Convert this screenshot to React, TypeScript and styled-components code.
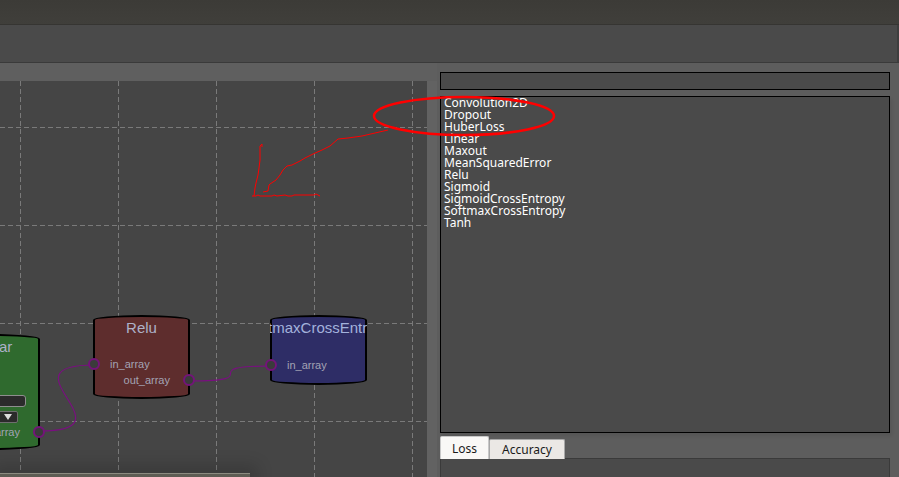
import React from "react";
import styled, { createGlobalStyle } from "styled-components";

const GlobalStyle = createGlobalStyle`
  html, body { margin: 0; padding: 0; background: #5f5f5f; overflow: hidden; }
  #root { width: 899px; height: 477px; }
`;

const Page = styled.div`
  position: relative;
  width: 899px;
  height: 477px;
  display: flex;
  flex-direction: column;
  background: #5f5f5f;
  overflow: hidden;
  font-family: "Liberation Sans", Arial, sans-serif;
`;

const TitleBar = styled.div`
  flex: none;
  height: 24px;
  background: linear-gradient(#3c3b37, #403f3b);
  border-bottom: 1px solid #363532;
`;

const ToolBar = styled.div`
  flex: none;
  height: 37px;
  background: #4a4a4a;
  border-bottom: 1px solid #3a3a3a;
  box-shadow: inset -2px 0 0 #3e3e3e;
`;

const Main = styled.div`
  flex: 1;
  display: flex;
  min-height: 0;
`;

const Canvas = styled.div`
  position: relative;
  flex: none;
  width: 427px;
  margin-top: 18px;
  background: #454545;
  overflow: hidden;
`;

const GridLayer = styled.svg`
  position: absolute;
  inset: 0;
`;

const Gutter = styled.div`
  flex: none;
  width: 10px;
  margin-top: 18px;
  background: #626262;
`;

const Side = styled.div`
  flex: 1;
  display: flex;
  flex-direction: column;
  padding: 9px 9px 0 3px;
  background: #5d5d5d;
`;

const SearchBox = styled.div`
  height: 16px;
  border: 1px solid #000;
  background: #4a4a4a;
`;

const List = styled.ul`
  list-style: none;
  margin: 6px 0 0;
  padding: 0 0 0 3px;
  height: 335px;
  border: 1px solid #000;
  background: #4a4a4a;
  box-shadow: 2px 3px 3px rgba(0, 0, 0, 0.08);
  font-family: "Noto Sans", sans-serif;
  font-size: 12px;
  line-height: 12px;
  color: #ffffff;
`;

const Item = styled.li`
  height: 12px;
  white-space: nowrap;
`;

const Tabs = styled.div`
  display: flex;
  align-items: flex-end;
  margin-top: 4px;
  height: 22px;
`;

const Tab = styled.div<{ $active?: boolean }>`
  box-sizing: border-box;
  height: ${(p) => (p.$active ? 23 : 20)}px;
  padding: 0 ${(p) => (p.$active ? 11 : 12)}px;
  display: flex;
  align-items: center;
  font-family: "Noto Sans", sans-serif;
  font-size: 12px;
  color: #1a1a1a;
  background: ${(p) => (p.$active ? "#f9f8f6" : "#ebe8e5")};
  border: 1px solid ${(p) => (p.$active ? "#c8c8c8" : "#a8a8a8")};
  border-bottom: none;
  border-radius: 2px 2px 0 0;
  position: relative;
  z-index: ${(p) => (p.$active ? 1 : 0)};
`;

const TabPanel = styled.div`
  flex: 1;
  border: 1px solid #3a3a3a;
  border-bottom: none;
  background: #4a4a4a;
  margin-top: -1px;
`;

const NodeBox = styled.div<{ $bg: string; $x: number; $y: number; $h: number }>`
  position: absolute;
  left: ${(p) => p.$x}px;
  top: ${(p) => p.$y}px;
  width: 97px;
  height: ${(p) => p.$h}px;
  box-sizing: border-box;
  border: 2px solid #000;
  border-radius: 50% / 5px;
  background: ${(p) => p.$bg};
  display: flex;
  flex-direction: column;
  z-index: 2;
`;

const NodeTitle = styled.div<{ $color?: string }>`
  height: 20px;
  margin: 0 -2px;
  display: flex;
  justify-content: center;
  align-items: center;
  overflow: hidden;
  white-space: nowrap;
  font-size: 15px;
  color: ${(p) => p.$color ?? "#adb1c8"};
`;

const Row = styled.div<{ $side: "in" | "out"; $mt?: number }>`
  position: relative;
  height: 16px;
  line-height: 16px;
  margin-top: ${(p) => p.$mt ?? 0}px;
  font-size: 11px;
  color: #a3a3b4;
  white-space: nowrap;
  text-align: ${(p) => (p.$side === "in" ? "left" : "right")};
  padding: ${(p) => (p.$side === "in" ? "0 0 0 15px" : "0 18px 0 0")};
`;

const Port = styled.span<{ $side: "in" | "out" }>`
  position: absolute;
  top: 2px;
  ${(p) => (p.$side === "in" ? "left: -7px;" : "right: -7px;")}
  width: 8px;
  height: 8px;
  border: 2px solid #74137a;
  border-radius: 50%;
  background: #3b3b3b;
`;

const ParamInput = styled.div<{ $mt: number }>`
  margin: ${(p) => p.$mt}px 0 0 10px;
  width: 69px;
  height: 10px;
  border: 1px solid #8e8e8e;
  border-radius: 3px;
  background: #2b2b2b;
`;

const ParamSelect = styled.div`
  margin: 4px 0 0 10px;
  width: 56px;
  height: 10px;
  border: 1px solid #6e6e6e;
  border-radius: 2px;
  background: #2b2b2b;
  display: flex;
  justify-content: flex-end;
  align-items: center;
  padding-right: 5px;
  box-sizing: content-box;
`;

const Arrow = styled.span`
  width: 0;
  height: 0;
  border-left: 4px solid transparent;
  border-right: 4px solid transparent;
  border-top: 6px solid #dcdcdc;
`;

const Wires = styled.svg`
  position: absolute;
  inset: 0;
  z-index: 1;
`;

const BottomBar = styled.div`
  position: absolute;
  left: 0;
  bottom: 0;
  width: 250px;
  height: 3px;
  background: #5e5d54;
  border-top: 1px solid #8c8b80;
  box-shadow: 0 0 16px 8px rgba(0, 0, 0, 0.16);
  z-index: 3;
`;

const Annotation = styled.svg`
  position: absolute;
  left: 0;
  top: 0;
  pointer-events: none;
  z-index: 10;
`;

const layers = [
  "Convolution2D",
  "Dropout",
  "HuberLoss",
  "Linear",
  "Maxout",
  "MeanSquaredError",
  "Relu",
  "Sigmoid",
  "SigmoidCrossEntropy",
  "SoftmaxCrossEntropy",
  "Tanh",
];

const vLines = [20.5, 118.5, 216.5, 314.5, 412.5];
const hLines = [46.5, 144.5, 242.5, 340.5];

function wire(x1: number, y1: number, x2: number, y2: number, d: number) {
  return `M${x1},${y1} C${x1 + d},${y1} ${x2 - d},${y2} ${x2},${y2}`;
}

export default function App() {
  return (
    <Page>
      <GlobalStyle />
      <TitleBar />
      <ToolBar />
      <Main>
        <Canvas>
          <GridLayer width={427} height={396}>
            {vLines.map((x) => (
              <line key={"v" + x} x1={x} y1={0} x2={x} y2={396} stroke="#7a7a7a" strokeWidth={1} strokeDasharray="5 3" />
            ))}
            {hLines.map((y) => (
              <line key={"h" + y} x1={0} y1={y} x2={427} y2={y} stroke="#7a7a7a" strokeWidth={1} strokeDasharray="5 3" />
            ))}
          </GridLayer>
          <Wires width={427} height={396}>
            <path d={wire(40, 350, 94, 284, 95)} fill="none" stroke="#7a0f80" strokeWidth={1.2} />
            <path d={wire(190, 300, 271, 285, 80)} fill="none" stroke="#7a0f80" strokeWidth={1.2} />
          </Wires>

          <NodeBox $bg="#2f6a2e" $x={-57} $y={253} $h={116}>
            <NodeTitle>Linear</NodeTitle>
            <ParamInput $mt={39} />
            <ParamSelect>
              <Arrow />
            </ParamSelect>
            <Row $side="out" $mt={1}>
              out_array
              <Port $side="out" />
            </Row>
          </NodeBox>

          <NodeBox $bg="#5e2d2d" $x={93} $y={234} $h={84}>
            <NodeTitle>Relu</NodeTitle>
            <Row $side="in" $mt={19}>
              in_array
              <Port $side="in" />
            </Row>
            <Row $side="out">
              out_array
              <Port $side="out" />
            </Row>
          </NodeBox>

          <NodeBox $bg="#2e2d66" $x={270} $y={234} $h={70}>
            <NodeTitle $color="#a3b2dc">SoftmaxCrossEntropy</NodeTitle>
            <Row $side="in" $mt={20}>
              in_array
              <Port $side="in" />
            </Row>
          </NodeBox>

          <BottomBar />
        </Canvas>
        <Gutter />
        <Side>
          <SearchBox />
          <List>
            {layers.map((l) => (
              <Item key={l}>{l}</Item>
            ))}
          </List>
          <Tabs>
            <Tab $active>Loss</Tab>
            <Tab>Accuracy</Tab>
          </Tabs>
          <TabPanel />
        </Side>
      </Main>

      <Annotation width={899} height={477}>
        <ellipse cx={464} cy={116} rx={90} ry={19} fill="none" stroke="#ff0000" strokeWidth={2.5} />
        <polyline
          fill="none"
          stroke="#ff0000"
          strokeWidth={1}
          points="388,130 375,133 362,136 348,138 338,139 330,146 322,150 313,154 305,158 300,161 292,165 287,166 283,170 280,175 276,180 270,184 269,185 268,191 263,192"
        />
        <polyline
          fill="none"
          stroke="#ff0000"
          strokeWidth={1}
          points="252,196 256,196 258,195 260,196 272,196 274,195 277,196 285,195 288,196 292,196 294,195 314,195 316,194 320,196"
        />
        <polyline
          fill="none"
          stroke="#ff0000"
          strokeWidth={1}
          points="254,196 255,188 256,183 258,175 259,168 260,160 260,146 262,144 262,147"
        />
      </Annotation>
    </Page>
  );
}
